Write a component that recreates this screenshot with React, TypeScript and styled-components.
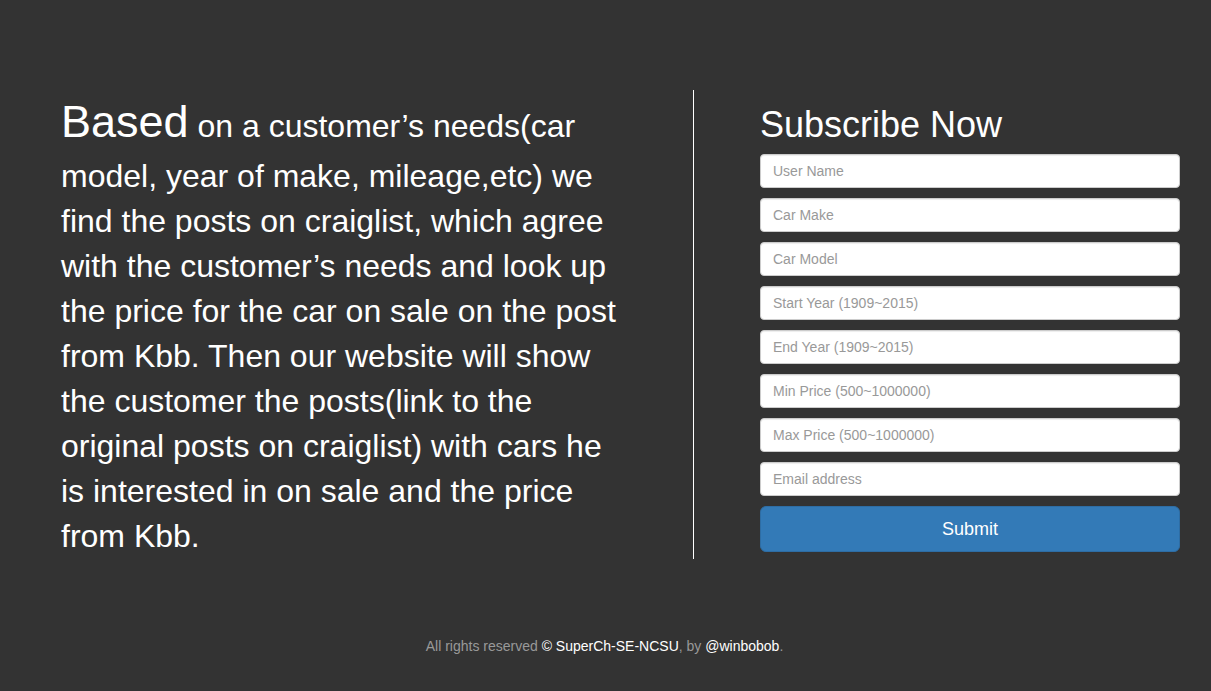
import React from "react";
import styled, { createGlobalStyle } from "styled-components";

const GlobalStyle = createGlobalStyle`
  *, *::before, *::after { box-sizing: border-box; }
  body {
    margin: 0;
    background: #333;
    color: #fff;
    font-family: "Liberation Sans", Arial, sans-serif;
    font-size: 14px;
    line-height: 20px;
  }
`;

const Page = styled.div`
  padding: 90px 31px 35px 61px;
`;

const Columns = styled.main`
  display: grid;
  grid-template-columns: 699fr 420fr;
`;

const Intro = styled.section`
  margin-right: 66px;
  padding-right: 74px;
  border-right: 1px solid #fff;
`;

const Description = styled.p`
  margin: 0;
  font-size: 32px;
  line-height: 45px;
`;

const Lead = styled.span`
  font-size: 45px;
  line-height: 64px;
`;

const SubscribeForm = styled.form`
  display: flex;
  flex-direction: column;
  gap: 10px;
  padding-top: 16px;
`;

const Title = styled.h2`
  margin: 0;
  font-size: 36px;
  line-height: 38px;
  font-weight: 400;
`;

const Field = styled.input`
  display: block;
  width: 100%;
  height: 34px;
  padding: 6px 12px;
  border: 1px solid #ccc;
  border-radius: 4px;
  background: #fff;
  color: #555;
  font-family: inherit;
  font-size: 14px;
  line-height: 20px;
  box-shadow: inset 0 1px 1px rgba(0, 0, 0, 0.075);

  &::placeholder {
    color: #999;
    opacity: 1;
  }

  &:focus {
    border-color: #66afe9;
    outline: 0;
  }
`;

const SubmitButton = styled.button`
  width: 100%;
  height: 46px;
  padding: 10px 16px;
  border: 1px solid #2e6da4;
  border-radius: 6px;
  background: #337ab7;
  color: #fff;
  font-family: inherit;
  font-size: 18px;
  line-height: 24px;
  cursor: pointer;

  &:hover {
    background: #286090;
  }
`;

const Footer = styled.footer`
  margin: 77px 32px 0 0;
  color: #999;
  text-align: center;
`;

const FooterLink = styled.a`
  color: #fff;
  text-decoration: none;
`;

const fields = [
  { name: "username", type: "text", label: "User Name" },
  { name: "make", type: "text", label: "Car Make" },
  { name: "model", type: "text", label: "Car Model" },
  { name: "startYear", type: "text", label: "Start Year (1909~2015)" },
  { name: "endYear", type: "text", label: "End Year (1909~2015)" },
  { name: "minPrice", type: "text", label: "Min Price (500~1000000)" },
  { name: "maxPrice", type: "text", label: "Max Price (500~1000000)" },
  { name: "email", type: "email", label: "Email address" },
];

export default function App() {
  return (
    <Page>
      <GlobalStyle />
      <Columns>
        <Intro>
          <Description>
            <Lead>Based</Lead> on a customer’s needs(car model, year of make,
            mileage,etc) we find the posts on craiglist, which agree with the
            customer’s needs and look up the price for the car on sale on the
            post from Kbb. Then our website will show the customer the
            posts(link to the original posts on craiglist) with cars he is
            interested in on sale and the price from Kbb.
          </Description>
        </Intro>
        <SubscribeForm onSubmit={(event) => event.preventDefault()}>
          <Title>Subscribe Now</Title>
          {fields.map(({ name, type, label }) => (
            <Field
              key={name}
              name={name}
              type={type}
              placeholder={label}
              aria-label={label}
            />
          ))}
          <SubmitButton type="submit">Submit</SubmitButton>
        </SubscribeForm>
      </Columns>
      <Footer>
        All rights reserved <FooterLink href="#">© SuperCh-SE-NCSU</FooterLink>
        , by <FooterLink href="#">@winbobob</FooterLink>.
      </Footer>
    </Page>
  );
}
